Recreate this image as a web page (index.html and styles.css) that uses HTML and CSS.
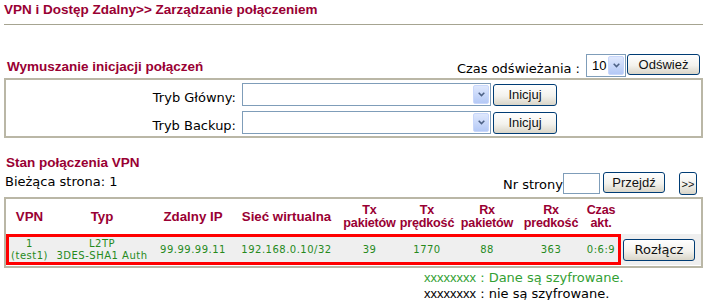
FILE: index.html
```html
<!DOCTYPE html>
<html lang="pl">
<head>
    <meta charset="UTF-8">
    <title>Zarządzanie połączeniem</title>
    <link rel="stylesheet" href="styles.css">
</head>
<body>
    <div class="page">
        <div class="title">VPN i Dostęp Zdalny&gt;&gt; Zarządzanie połączeniem</div>

        <div class="toolbar">
            <div class="section-head">Wymuszanie inicjacji połączeń</div>
            <div class="refresh">
                <span class="refresh-label">Czas odświeżania :</span>
                <span class="select select-small">
                    <span class="select-value">10</span>
                    <span class="select-arrow"><svg width="7" height="5" viewBox="0 0 7 5"><path d="M0.7 0.7 L3.5 3.6 L6.3 0.7" fill="none" stroke="#4d6185" stroke-width="1.5"/></svg></span>
                </span>
                <button class="btn btn-refresh">Odśwież</button>
            </div>
        </div>

        <div class="box dial">
            <div class="dial-row">
                <span class="dial-label">Tryb Główny:</span>
                <span class="select select-wide">
                    <span class="select-value"></span>
                    <span class="select-arrow"><svg width="7" height="5" viewBox="0 0 7 5"><path d="M0.7 0.7 L3.5 3.6 L6.3 0.7" fill="none" stroke="#4d6185" stroke-width="1.5"/></svg></span>
                </span>
                <button class="btn btn-dial">Inicjuj</button>
            </div>
            <div class="dial-row">
                <span class="dial-label">Tryb Backup:</span>
                <span class="select select-wide">
                    <span class="select-value"></span>
                    <span class="select-arrow"><svg width="7" height="5" viewBox="0 0 7 5"><path d="M0.7 0.7 L3.5 3.6 L6.3 0.7" fill="none" stroke="#4d6185" stroke-width="1.5"/></svg></span>
                </span>
                <button class="btn btn-dial">Inicjuj</button>
            </div>
        </div>

        <div class="section-head status-head">Stan połączenia VPN</div>
        <div class="pager-row">
            <span class="current">Bieżąca strona: 1</span>
            <div class="pager">
                <span class="pager-label">Nr strony</span>
                <input type="text" class="page-input">
                <button class="btn btn-go">Przejdź</button>
                <button class="btn btn-next">&gt;&gt;</button>
            </div>
        </div>

        <div class="box status">
            <div class="cols head">
                <div>VPN</div>
                <div>Typ</div>
                <div>Zdalny IP</div>
                <div>Sieć wirtualna</div>
                <div class="two">Tx<br>pakietów</div>
                <div class="two">Tx<br>prędkość</div>
                <div class="two">Rx<br>pakietów</div>
                <div class="two">Rx<br>predkość</div>
                <div class="two">Czas<br>akt.</div>
            </div>
            <div class="vpn-row">
                <div class="cols data">
                    <div>1<br>(test1)</div>
                    <div>L2TP<br>3DES-SHA1 Auth</div>
                    <div>99.99.99.11</div>
                    <div>192.168.0.10/32</div>
                    <div>39</div>
                    <div>1770</div>
                    <div>88</div>
                    <div>363</div>
                    <div>0:6:9</div>
                </div>
                <button class="btn btn-drop">Rozłącz</button>
            </div>
        </div>

        <div class="legend">
            <div class="legend-on"><span class="xs">xxxxxxxx</span> : Dane są szyfrowane.</div>
            <div><span class="xs">xxxxxxxx</span> : nie są szyfrowane.</div>
        </div>
    </div>
</body>
</html>
```

FILE: styles.css
```css
body {
    margin: 0;
    font-family: "DejaVu Sans", Verdana, sans-serif;
    font-size: 13px;
    color: #000;
    background: #fff;
}
.page {
    padding: 0 4px;
}
.title {
    font-family: "Liberation Sans", Arial, sans-serif;
    font-weight: bold;
    font-size: 13.5px;
    line-height: 16px;
    color: #990033;
    padding: 2px 0 6px;
    border-bottom: 1px solid #a6a491;
}
.section-head {
    font-family: "Liberation Sans", Arial, sans-serif;
    font-weight: bold;
    font-size: 13.5px;
    line-height: 16px;
    color: #990033;
}
.toolbar {
    display: flex;
    justify-content: space-between;
    align-items: flex-start;
    height: 23px;
    margin-top: 29px;
    padding-right: 3px;
}
.toolbar .section-head {
    margin: 5px 0 0 3px;
}
.refresh {
    display: flex;
    align-items: flex-start;
}
.refresh-label {
    line-height: 16px;
    margin: 7px 6px 0 0;
}

.select {
    display: inline-flex;
    box-sizing: border-box;
    height: 23px;
    border: 1px solid #7f9db9;
    background: #fff;
}
.select-value {
    flex: 1;
    font-family: "Liberation Sans", Arial, sans-serif;
    font-size: 13px;
    line-height: 21px;
    padding-left: 5px;
}
.select-arrow {
    display: flex;
    align-items: center;
    justify-content: center;
    box-sizing: border-box;
    width: 16px;
    margin: 1px;
    border: 1px solid #c8d7fb;
    border-radius: 2px;
    background: linear-gradient(#dfe8fd, #b4c9f6);
}
.select-small {
    width: 40px;
}
.select-wide {
    width: 249px;
}

.btn {
    box-sizing: border-box;
    padding: 0;
    font-family: "Liberation Sans", Arial, sans-serif;
    font-size: 13px;
    color: #111;
    border: 1px solid #003c74;
    border-radius: 3px;
    background: linear-gradient(#ffffff, #f3f2ed 55%, #d9d5c8);
    cursor: pointer;
}
.btn-refresh {
    width: 73px;
    height: 21px;
    margin-left: 1px;
}

.box {
    box-sizing: border-box;
    border: 2px solid #bab7a6;
}
.dial {
    display: flex;
    flex-direction: column;
    gap: 5px;
    margin-top: 1px;
    padding: 3px 0 2px;
}
.dial-row {
    display: flex;
    align-items: center;
    height: 23px;
}
.dial-label {
    align-self: flex-end;
    width: 230px;
    margin-right: 6px;
    text-align: right;
    line-height: 16px;
}
.btn-dial {
    width: 64px;
    height: 22px;
    margin-left: 2px;
}

.status-head {
    margin-top: 17px;
    padding-left: 2px;
}
.pager-row {
    display: flex;
    justify-content: space-between;
    align-items: flex-start;
    height: 23px;
    margin-top: 1px;
    padding-right: 6px;
}
.current {
    line-height: 16px;
    margin-top: 2px;
    padding-left: 1px;
}
.pager {
    display: flex;
    align-items: flex-start;
}
.pager-label {
    line-height: 16px;
    margin-top: 5px;
}
.page-input {
    box-sizing: border-box;
    width: 37px;
    height: 21px;
    margin: 1px 0 0;
    padding: 0;
    border: 1px solid #7f9db9;
}
.btn-go {
    width: 62px;
    height: 21px;
    margin-left: 3px;
}
.btn-next {
    width: 18px;
    height: 23px;
    margin-left: 14px;
    font-size: 11px;
}

.status {
    margin-top: 2px;
}
.cols {
    display: grid;
    grid-template-columns: 41px 104px 78px 109px 57px 58px 62px 66px 34px;
    justify-items: center;
    align-items: center;
    text-align: center;
    white-space: nowrap;
}
.head {
    height: 35px;
    padding-left: 3px;
    font-family: "Liberation Sans", Arial, sans-serif;
    font-weight: bold;
    font-size: 13.3px;
    line-height: 13px;
    color: #990033;
}
.head .two {
    font-size: 12.6px;
    letter-spacing: -0.2px;
}
.vpn-row {
    display: flex;
    align-items: center;
    background: #efefef;
    margin-bottom: 1px;
}
.data {
    height: 25px;
    border: 3px solid #ff0000;
    font-size: 10px;
    letter-spacing: 0.5px;
    line-height: 12px;
    color: #268a1c;
}
.btn-drop {
    width: 72px;
    height: 22px;
    margin-left: 2px;
    font-family: "DejaVu Sans", Verdana, sans-serif;
}

.legend {
    margin-top: 2px;
    padding-left: 420px;
    line-height: 16px;
}
.legend-on {
    color: #33a033;
}
.xs {
    font-family: "Liberation Sans", Arial, sans-serif;
}
```
